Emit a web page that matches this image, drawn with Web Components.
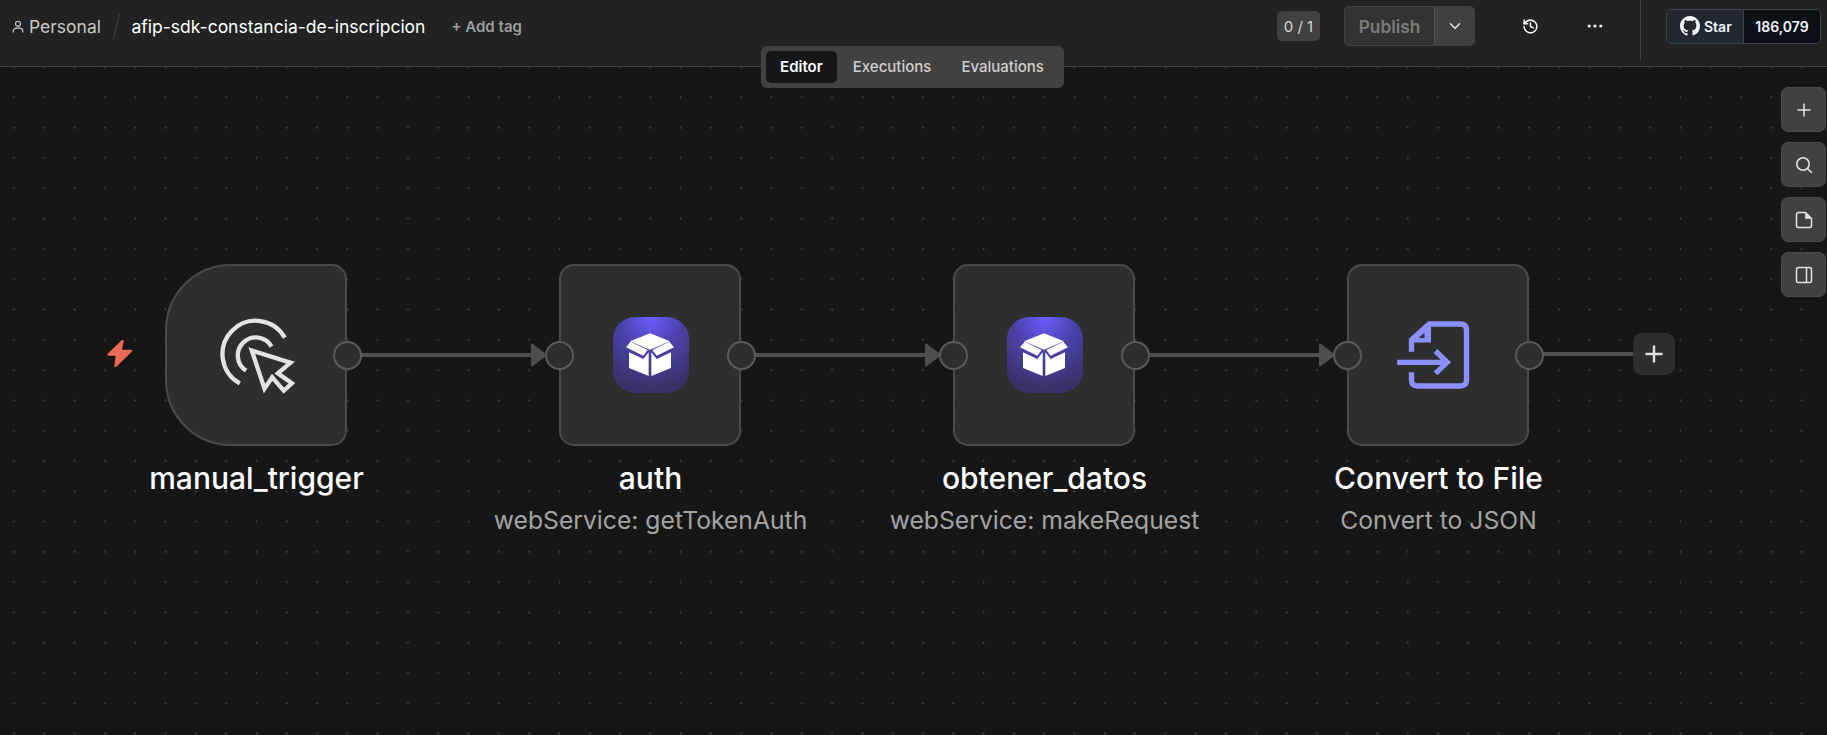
<!DOCTYPE html>
<html lang="en">
<head>
<meta charset="utf-8">
<title>afip-sdk-constancia-de-inscripcion</title>
<style>
html,body{margin:0;height:100%;background:#161616;overflow:hidden;font-family:Inter,"Liberation Sans",sans-serif}
</style>
</head>
<body>
<wf-app>
  <wf-header slot="header"></wf-header>
  <wf-tabs slot="tabs"></wf-tabs>
  <wf-canvas slot="canvas">
    <wf-edge style="left:361px;top:286px;width:186px" arrow></wf-edge>
    <wf-edge style="left:755px;top:286px;width:186px" arrow></wf-edge>
    <wf-edge style="left:1149px;top:286px;width:186px" arrow></wf-edge>
    <wf-edge style="left:1543px;top:285px;width:91px"></wf-edge>
    <wf-bolt style="left:106px;top:272px"></wf-bolt>
    <wf-node kind="trigger" label="manual_trigger" style="left:165px;top:197px">
      <svg width="110" height="110" viewBox="4.500 0 330 330" fill="none" stroke="#e3e3e3" stroke-width="13">
        <path d="M118 250A100 100 0 1 1 253 113"/>
        <path d="M137 212A54 54 0 1 1 213 140"/>
        <path stroke-linejoin="miter" d="M154 152L270 188L232 220L274 250L250 272L215 232L192 266Z"/>
      </svg>
    </wf-node>
    <wf-node label="auth" sub="webService: getTokenAuth" style="left:559px;top:197px"><wf-box-icon></wf-box-icon></wf-node>
    <wf-node label="obtener_datos" sub="webService: makeRequest" style="left:953px;top:197px"><wf-box-icon></wf-box-icon></wf-node>
    <wf-node label="Convert to File" sub="Convert to JSON" style="left:1347px;top:197px">
      <svg width="110" height="90" viewBox="10.500 0 330 270" fill="none" stroke="#8c90ff" stroke-width="16">
        <path d="M93 125V90L146 42H240Q258 42 258 60V210Q258 228 240 228H111Q93 228 93 210V187"/>
        <path fill="#8c90ff" stroke-width="11" d="M146 46V92H100Z"/>
        <path fill="#2e2e2e" stroke="none" d="M132 68V84H114Z"/>
        <path d="M50 157H195M165 123L200 157L165 190"/>
      </svg>
    </wf-node>
    <wf-add style="left:1633px;top:266px"></wf-add>
  </wf-canvas>
  <wf-tools slot="tools"></wf-tools>
</wf-app>
<script>
function def(name, html, attrs){
  const t=document.createElement('template');t.innerHTML=html;
  customElements.define(name,class extends HTMLElement{
    constructor(){super();this.attachShadow({mode:'open'}).appendChild(t.content.cloneNode(true));}
    connectedCallback(){ if(attrs) attrs(this); }
  });
}
def('wf-app',`<style>
:host{display:block;position:relative;width:100%;height:100vh;overflow:hidden;background:#161616;color:#fff;font-family:Inter,"Liberation Sans",sans-serif}
.col{display:flex;flex-direction:column;height:100%}
.main{flex:1;position:relative;min-height:0}
</style><div class="col"><slot name="header"></slot><div class="main"><slot name="canvas"></slot><slot name="tools"></slot></div></div><slot name="tabs"></slot>`);

def('wf-header',`<style>
:host{display:flex;align-items:center;box-sizing:border-box;height:67px;flex:none;background:#222;border-bottom:1px solid #414141;padding:0 6px 0 12px;font-size:17.500px}
svg{display:block}
.left{display:flex;align-items:center;margin-top:-13px}
.per{color:#c8c8c8;margin-left:5px}
.sl{width:1px;height:25px;background:#414141;transform:rotate(14deg);margin:0 14.500px 0 15px}
.ttl{color:#fff;font-size:17.500px}
.tag{color:#9d9d9d;font-size:15px;font-weight:600;margin-left:26px}
.right{display:flex;align-items:center;margin-left:auto;height:100%;margin-top:-14px}
.badge{width:43px;height:30px;box-sizing:border-box;background:#414141;border-radius:5px;color:#d8d8d8;font-size:15px;display:flex;align-items:center;justify-content:center;white-space:nowrap}
.pub{display:flex;margin-left:24px;height:40px;width:131px;box-sizing:border-box;border:1px solid #414141;border-radius:5px;background:#333;overflow:hidden}
.pub .a{flex:1;display:flex;align-items:center;justify-content:center;color:#7c7c7c;font-weight:600;font-size:17.300px}
.pub .b{width:39px;background:#414141;border-left:1px solid #555;display:flex;align-items:center;justify-content:center}
.ib{display:flex;width:20px;justify-content:center}
.hist{margin-left:45px}
.dots{margin-left:45px}
.vr{width:1px;background:#414141;height:67px;align-self:flex-start;margin-left:35px;margin-top:0}
gh-star{margin-left:25px}
</style>
<div class="left">
<svg width="12" height="13" viewBox="0 0 13 14" fill="none" stroke="#c8c8c8" stroke-width="1.300"><circle cx="6.500" cy="4" r="2.700"/><path d="M1.300 13.400v-1.200a3.400 3.400 0 0 1 3.400-3.400h3.600a3.400 3.400 0 0 1 3.400 3.400v1.200"/></svg>
<span class="per">Personal</span><span class="sl"></span><span class="ttl">afip-sdk-constancia-de-inscripcion</span><span class="tag">+ Add tag</span>
</div>
<div class="right" id="r">
<span class="badge">0 / 1</span>
<div class="pub"><div class="a">Publish</div><div class="b"><svg width="14" height="14" viewBox="0 0 14 14" fill="none" stroke="#e6e6e6" stroke-width="1.500" stroke-linecap="round" stroke-linejoin="round"><path d="M2.500 4.800L7 9.300L11.500 4.800"/></svg></div></div>
<span class="ib hist"><svg width="17" height="17" viewBox="0 0 24 24" fill="none" stroke="#f2f2f2" stroke-width="2.200" stroke-linecap="round" stroke-linejoin="round"><path d="M3 12a9 9 0 1 0 9-9 9.750 9.750 0 0 0-6.740 2.740L3 8"/><path d="M3 3v5h5"/><path d="M12 7v5l4 2"/></svg></span>
<span class="ib dots"><svg width="16" height="4" viewBox="0 0 16 4" fill="#f2f2f2"><circle cx="2.200" cy="2" r="1.600"/><circle cx="8" cy="2" r="1.600"/><circle cx="13.800" cy="2" r="1.600"/></svg></span>
<span class="vr"></span>
<gh-star></gh-star>
</div>`);

def('gh-star',`<style>
:host{display:flex;box-sizing:border-box;width:155px;height:35px;border:1px solid #3d444d;border-radius:5px;overflow:hidden;font-size:14px;font-weight:600;color:#f0f6fc;font-family:Inter,"Liberation Sans",sans-serif}
.l{width:76px;background:#212830;display:flex;align-items:center;padding-left:13px;box-sizing:border-box;gap:4px}
.c{flex:1;background:#0d1117;border-left:1px solid #3d444d;display:flex;align-items:center;justify-content:center}
svg{display:block;flex:none}
</style><div class="l"><svg width="20" height="20" viewBox="0 0 16 16" fill="#f0f6fc"><path d="M8 0C3.58 0 0 3.58 0 8c0 3.54 2.29 6.53 5.47 7.59.4.07.55-.17.55-.38 0-.19-.01-.82-.01-1.49-2.01.37-2.53-.49-2.69-.94-.09-.23-.48-.94-.82-1.13-.28-.15-.68-.52-.01-.53.63-.01 1.08.58 1.23.82.72 1.21 1.87.87 2.33.66.07-.52.28-.87.51-1.07-1.78-.2-3.64-.89-3.64-3.95 0-.87.31-1.59.82-2.15-.08-.2-.36-1.02.08-2.12 0 0 .67-.21 2.2.82.64-.18 1.32-.27 2-.27.68 0 1.36.09 2 .27 1.53-1.04 2.2-.82 2.2-.82.44 1.1.16 1.92.08 2.12.51.56.82 1.27.82 2.15 0 3.07-1.87 3.75-3.65 3.95.29.25.54.73.54 1.48 0 1.07-.01 1.93-.01 2.2 0 .21.15.46.55.38A8.013 8.013 0 0016 8c0-4.42-3.58-8-8-8z"/></svg><span>Star</span></div><div class="c">186,079</div>`);

def('wf-tabs',`<style>
:host{position:absolute;left:761px;top:46px;display:flex;gap:0;box-sizing:border-box;height:42px;width:303px;padding:5px;background:#414141;border-radius:6px;font-size:15px;font-weight:500;color:#cfcfcf;line-height:30px}
span{display:flex;align-items:center;justify-content:center;border-radius:5px;white-space:nowrap;padding-bottom:1px;box-sizing:border-box}
.on{width:71px;background:#161616;color:#fff;font-weight:600}
.t1{width:111px}
.t2{width:113px;margin-left:-1px}
</style><span class="on">Editor</span><span class="t1">Executions</span><span class="t2">Evaluations</span>`);

def('wf-canvas',`<style>
:host{display:block;position:absolute;inset:0;background-color:#161616;background-image:radial-gradient(circle at center,#3c3c3c 0,#3c3c3c .9px,transparent 1.200px);background-size:30.3px 30.3px;background-position:-1.050px -15.050px}
</style><slot></slot>`);

def('wf-node',`<style>
:host{position:absolute;display:flex;flex-direction:column;align-items:center;width:182px}
.card{position:relative;box-sizing:border-box;width:182px;height:182px;padding-left:1px;background:#2e2e2e;border:2px solid #4a4a4a;border-radius:15px;display:flex;align-items:center;justify-content:center}
:host([kind=trigger]) .card{border-radius:66px 15px 15px 66px}
.h{position:absolute;top:50%;width:29px;height:29px;box-sizing:border-box;margin-top:-14.500px;border-radius:50%;background:#2e2e2e;border:2px solid #5a5a5a}
.o{right:-16.500px}
.i{left:-16px}
:host([kind=trigger]) .i{display:none}
.lb{margin-top:14px;padding-left:1px;font-size:30px;line-height:36px;font-weight:500;color:#fff;white-space:nowrap}
.sb{margin-top:8px;padding-left:1px;font-size:24.700px;line-height:32px;color:#a3a3a3;white-space:nowrap}
svg{display:block}
</style><div class="card"><span class="h i"></span><slot></slot><span class="h o"></span></div><div class="lb" id="l"></div><div class="sb" id="s"></div>`,
el=>{const r=el.shadowRoot;r.getElementById('l').textContent=el.getAttribute('label')||'';const s=el.getAttribute('sub');if(s)r.getElementById('s').textContent=s;else r.getElementById('s').remove();});

def('wf-box-icon',`<style>
:host{display:block;width:76px;height:76px;border-radius:22px;background:radial-gradient(ellipse 85% 95% at 50% 0%,#6c5dff 0%,#4d42b0 45%,#3a3168 100%)}
svg{display:block}
</style><svg width="76" height="76" viewBox="39 54 228 228" fill="#fff"><path d="M150 103L210 127L150 152L90 127Z"/><path d="M78 145L92 128L143 153L130 170Z"/><path d="M222 145L208 128L157 153L170 170Z"/><path d="M87 160L130 180L146 160V231L87 207Z"/><path d="M213 160L170 180L154 160V231L213 207Z"/></svg>`);

def('wf-edge',`<style>
:host{position:absolute;display:block;height:4px;background:#4e4e4e}
.a{display:none;position:absolute;right:0;top:-10px;width:16px;height:24px}
:host([arrow]) .a{display:block}
svg{display:block}
</style><span class="a"><svg width="16" height="24" viewBox="0 0 16 24" fill="#4e4e4e" stroke="#4e4e4e" stroke-width="2" stroke-linejoin="round"><path d="M1 1.500L15 12L1 22.500Z"/></svg></span>`);

def('wf-bolt',`<style>:host{position:absolute;display:block;width:28px;height:30px}svg{display:block}</style>
<svg width="28" height="30" viewBox="0 0 28 30" fill="#ea6b55" stroke="#ea6b55" stroke-width="2.400" stroke-linejoin="round"><path d="M16.500 2L2.500 15.500H11L9.500 27L25 12H14.500Z"/></svg>`);

def('wf-add',`<style>:host{position:absolute;display:flex;align-items:center;justify-content:center;width:42px;height:42px;background:#2e2e2e;border-radius:9px}svg{display:block}</style>
<svg width="20" height="20" viewBox="0 0 20 20" stroke="#e0e0e0" stroke-width="2.400"><path d="M10 1.500V18.500M1.500 10H18.500"/></svg>`);

def('wf-tools',`<style>
:host{position:absolute;right:1px;top:20px;display:flex;flex-direction:column;gap:10px}
</style><wf-tool><svg viewBox="0 0 16 16" width="16" height="16" fill="none" stroke="#e3e3e3" stroke-width="1.500"><path d="M8 1.500V14.500M1.500 8H14.500"/></svg></wf-tool>
<wf-tool><svg viewBox="0 0 18 18" width="18" height="18" fill="none" stroke="#e3e3e3" stroke-width="1.600" stroke-linecap="round"><circle cx="8" cy="8" r="6.200"/><path d="M12.500 12.500L16.500 16.500"/></svg></wf-tool>
<wf-tool><svg viewBox="0 0 18 18" width="18" height="18" fill="none" stroke="#e3e3e3" stroke-width="1.500" stroke-linejoin="round"><path d="M3.500 1.500H10.500L16.500 7.500V15A1.500 1.500 0 0 1 15 16.500H3A1.500 1.500 0 0 1 1.500 15V3.500A2 2 0 0 1 3.500 1.500Z"/><path fill="#e3e3e3" d="M10.500 1.500V7.500H16.500Z" stroke-width=".6"/></svg></wf-tool>
<wf-tool><svg viewBox="0 0 18 18" width="18" height="18" fill="none" stroke="#e3e3e3" stroke-width="1.500"><rect x="1.500" y="1.500" width="15" height="15" rx="2"/><path d="M11.500 1.500V16.500"/></svg></wf-tool>`);

def('wf-tool',`<style>
:host{display:flex;align-items:center;justify-content:center;box-sizing:border-box;width:45px;height:45px;background:#414141;border:1px solid #4a4a4a;border-radius:7px}
::slotted(svg){display:block}
</style><slot></slot>`);
</script>
</body>
</html>
